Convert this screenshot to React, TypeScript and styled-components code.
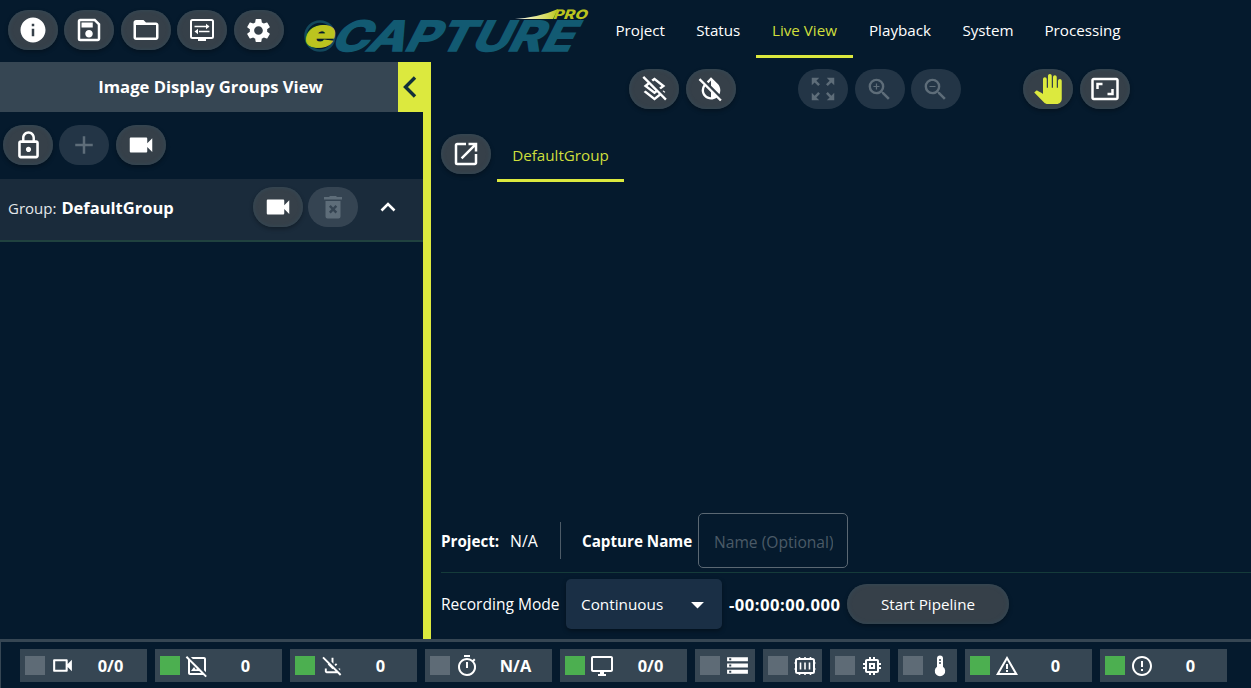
import React from 'react';
import styled, { createGlobalStyle, css } from 'styled-components';
import {
  MdAdd,
  MdArrowDropDown,
  MdErrorOutline,
  MdFolderOpen,
  MdInfo,
  MdInvertColorsOff,
  MdLockOutline,
  MdMemory,
  MdOpenInNew,
  MdOutlineAspectRatio,
  MdOutlineDesktopWindows,
  MdOutlineFileDownloadOff,
  MdOutlineImageNotSupported,
  MdOutlineLayersClear,
  MdOutlineSave,
  MdOutlineTimer,
  MdOutlineVideocam,
  MdPanTool,
  MdSettings,
  MdStorage,
  MdVideocam,
  MdWarningAmber,
  MdZoomIn,
  MdZoomOut,
  MdZoomOutMap,
} from 'react-icons/md';

const GlobalStyle = createGlobalStyle`
  * {
    box-sizing: border-box;
  }

  body {
    margin: 0;
    background: #051a2d;
    color: #fff;
    font-family: 'Open Sans', 'Noto Sans', sans-serif;
    font-size: 15.2px;
    overflow: hidden;
  }

  svg {
    display: block;
    flex-shrink: 0;
    overflow: visible;
  }
`;

const Page = styled.div`
  width: 1251px;
  height: 688px;
  display: flex;
  flex-direction: column;
`;

const Header = styled.header`
  height: 62px;
  flex-shrink: 0;
  display: flex;
  padding-left: 8px;
`;

const ButtonGroup = styled.div<{ $gap?: number }>`
  display: flex;
  align-items: center;
  gap: ${({ $gap }) => $gap ?? 6.4}px;
`;

const HeaderButtons = styled(ButtonGroup)`
  height: 60px;
  width: 295px;
`;

const PillButton = styled.button<{ $width?: number }>`
  width: ${({ $width }) => $width ?? 50}px;
  height: 40px;
  padding: 0;
  flex-shrink: 0;
  display: flex;
  align-items: center;
  justify-content: center;
  border: none;
  border-radius: 20px;
  background: #364049;
  color: #fff;
  font: inherit;
  box-shadow: inset 0 0 4px #344b5a, 0 2px 4px rgba(0, 0, 0, 0.3);

  &:disabled {
    background: rgba(255, 255, 255, 0.12);
    color: #5e6d79;
    box-shadow: none;
  }
`;

const HandButton = styled(PillButton)`
  color: #dce93e;
`;

const LogoBox = styled.div`
  width: 297px;
  height: 60px;
`;

const Tabs = styled.nav`
  display: flex;
  height: 58px;
`;

const Tab = styled.a<{ $width: number; $active?: boolean }>`
  width: ${({ $width }) => $width}px;
  display: flex;
  align-items: center;
  justify-content: center;
  padding-top: 5px;
  border-bottom: 3px solid transparent;
  white-space: nowrap;

  ${({ $active }) =>
    $active &&
    css`
      color: #cfdf3c;
      border-bottom-color: #dce93e;
    `}
`;

const Main = styled.main`
  height: 577px;
  flex-shrink: 0;
  display: flex;
`;

const SidePanel = styled.aside`
  width: 431px;
  flex-shrink: 0;
  border-right: 8px solid #dce93e;
`;

const PanelHeader = styled.div`
  height: 50px;
  display: flex;
  margin-right: -8px;
`;

const PanelTitle = styled.h2`
  flex: 1;
  margin: 0;
  padding-left: 23px;
  background: #364653;
  font-size: 16.65px;
  font-weight: 700;
  line-height: 50px;
  text-align: center;
`;

const CollapseButton = styled.button`
  width: 33px;
  padding: 0 9px 0 0;
  border: none;
  background: #dce93e;
  color: #12303a;
  display: flex;
  align-items: center;
  justify-content: center;
`;

const PanelTools = styled(ButtonGroup)`
  height: 67px;
  padding: 0 0 1px 3px;
`;

const GroupRow = styled.div`
  height: 63px;
  display: flex;
  align-items: center;
  padding: 0 27px 6px 8px;
  background: #1a2b3b;
  border-bottom: 2px solid #20423f;
`;

const GroupName = styled.span`
  flex: 1;
  display: flex;
  align-items: baseline;
  gap: 5px;
  padding-top: 2px;
  font-size: 15px;
  color: #e4e8eb;

  b {
    font-size: 16.5px;
    color: #fff;
  }
`;

const ChevronBox = styled.span`
  width: 38px;
  display: flex;
  justify-content: flex-end;
`;

const View = styled.section`
  flex: 1;
  display: flex;
  flex-direction: column;
  padding-left: 10px;
`;

const ViewTools = styled.div`
  height: 54px;
  display: flex;
  align-items: center;
  gap: 62.5px;
  padding-left: 188.3px;
`;

const ViewTabs = styled.div`
  height: 66px;
  display: flex;
  gap: 6px;
  padding-top: 18px;
`;

const GroupTab = styled(Tab)`
  height: 48px;
  padding-top: 0;
  padding-bottom: 4px;
`;

const Canvas = styled.div`
  flex: 1;
`;

const CaptureRow = styled.div`
  height: 62px;
  display: flex;
  align-items: center;
  padding: 2px 0 4px;
  border-bottom: 1px solid #153b3a;
`;

const Label = styled.span<{ $width: number; $bold?: boolean; $size?: number; $spacing?: number }>`
  width: ${({ $width }) => $width}px;
  flex-shrink: 0;
  white-space: nowrap;
  font-weight: ${({ $bold }) => ($bold ? 700 : 400)};
  font-size: ${({ $size }) => $size ?? 15}px;
  letter-spacing: ${({ $spacing }) => $spacing ?? 0}px;
`;

const Separator = styled.span`
  width: 1px;
  height: 37px;
  margin-right: 21px;
  background: #4d5b67;
`;

const NameInput = styled.input`
  width: 150px;
  height: 55px;
  padding: 2px 14px 0 15px;
  border: 1px solid #5b6873;
  border-radius: 5px;
  background: transparent;
  color: #fff;
  font: inherit;
  font-size: 15.6px;

  &::placeholder {
    color: #4b5a67;
    opacity: 1;
  }
`;

const RecordRow = styled.div`
  height: 66px;
  display: flex;
  align-items: center;
  padding-bottom: 4px;
`;

const ModeSelect = styled.div`
  width: 156px;
  height: 50px;
  margin-right: 7px;
  padding: 0 9px 0 15px;
  display: flex;
  align-items: center;
  justify-content: space-between;
  border-radius: 5px;
  background: #1a2f45;
  font-size: 15.3px;
  box-shadow: 0 2px 4px rgba(0, 0, 0, 0.35);
`;

const Footer = styled.footer`
  height: 49px;
  flex-shrink: 0;
  display: flex;
  gap: 8px;
  padding: 7px 0 0 19px;
  border-top: 3px solid #364653;
  border-left: 1px solid #364653;
`;

const StatusItem = styled.div<{ $wide: boolean }>`
  width: ${({ $wide }) => ($wide ? 127 : 59.5)}px;
  height: 33px;
  flex-shrink: 0;
  display: flex;
  align-items: center;
  padding-left: 5px;
  background: #364653;
`;

const Indicator = styled.span<{ $ok?: boolean }>`
  width: 20px;
  height: 19px;
  flex-shrink: 0;
  background: ${({ $ok }) => ($ok ? '#4caf50' : '#5e6b76')};
`;

const StatusIcon = styled.span<{ $wide: boolean }>`
  width: ${({ $wide }) => ($wide ? 34 : 34.5)}px;
  display: flex;
  justify-content: center;
`;

const StatusValue = styled.b`
  width: 63px;
  font-size: 16.4px;
  text-align: center;
`;

const Logo = () => (
  <svg width="297" height="60" viewBox="303 0 297 60">
    <defs>
      <linearGradient id="swoosh" x1="0" x2="1">
        <stop offset="0" stopColor="#fff" />
        <stop offset="0.75" stopColor="#d5da5a" />
        <stop offset="1" stopColor="#bcc41f" />
      </linearGradient>
    </defs>
    <circle cx="320" cy="36" r="14.5" fill="none" stroke="#13485c" strokeWidth="2.5" />
    <text
      transform="translate(302.5 46.5) skewX(-15)"
      fontFamily="Inter, sans-serif"
      fontSize="39"
      fontWeight="900"
      fill="#bcc41f"
      stroke="#bcc41f"
      textLength="30"
      lengthAdjust="spacingAndGlyphs"
    >
      e
    </text>
    <text
      transform="translate(329 51.2) skewX(-27)"
      fontFamily="Inter, sans-serif"
      fontSize="41.5"
      fontWeight="700"
      fill="#125a72"
      stroke="#125a72"
      strokeWidth="1.6"
      textLength="241"
      lengthAdjust="spacingAndGlyphs"
    >
      CAPTURE
    </text>
    <path d="M515 19 Q540 17 558 9 L553 19 Z" fill="url(#swoosh)" />
    <text
      transform="translate(552.5 18.800) skewX(-20)"
      fontFamily="Inter, sans-serif"
      fontSize="13"
      fontWeight="800"
      fill="#bcc41f"
      textLength="34"
      lengthAdjust="spacingAndGlyphs"
    >
      PRO
    </text>
  </svg>
);

const DisplaySettingsIcon = () => (
  <svg width="26" height="26" viewBox="0 0 26 26" fill="none" stroke="currentColor">
    <rect x="2" y="3" width="22" height="18" rx="1.5" strokeWidth="2" />
    <path d="M9 21.5h8v2.5h-8z" fill="currentColor" stroke="none" />
    <path d="M5.5 9.5h14M10 14.5h10.5" strokeWidth="1.6" />
    <path d="M17 6.8l3.5 2.7-3.5 2.7zM9 11.8l-3.5 2.7L9 17.2z" fill="currentColor" stroke="none" />
  </svg>
);

const DeleteIcon = () => (
  <svg width="20" height="24" viewBox="0 0 20 24" fill="currentColor">
    <path d="M1 2h5l1-1h6l1 1h5v2.5H1z" />
    <path
      fillRule="evenodd"
      d="M2.5 6h15v15.500a2 2 0 0 1-2 2h-11a2 2 0 0 1-2-2zM6 11.800l2.400 2.500L6 16.800l1.700 1.700 2.400-2.500 2.400 2.500 1.700-1.700-2.400-2.500 2.400-2.500-1.700-1.700-2.400 2.500-2.400-2.500z"
    />
  </svg>
);

const MemoryCardIcon = () => (
  <svg width="22" height="20" viewBox="0 0 22 20" fill="none" stroke="currentColor">
    <rect x="2" y="3" width="18" height="14" rx="1.5" strokeWidth="2" />
    <path d="M6.500 6.500v7M11 6.500v7M15.500 6.500v7" strokeWidth="1.6" />
    <path d="M5.500 1v2M11 1v2M16.500 1v2M5.500 17v2M11 17v2M16.500 17v2M0.500 7h2M0.500 13h2M19.500 7h2M19.500 13h2" strokeWidth="1.6" />
  </svg>
);

const ThermometerIcon = () => (
  <svg width="12" height="22" viewBox="0 0 12 22">
    <path d="M3 3.500a3 3 0 0 1 6 0v8.300a5.200 5.200 0 1 1-6 0z" fill="currentColor" />
    <path d="M6 4v2M6 7v2" stroke="#364653" strokeWidth="1.5" />
  </svg>
);

const Chevron = ({ up }: { up?: boolean }) => (
  <svg width={up ? 16 : 14} height={up ? 10 : 22} viewBox={up ? '0 0 16 10' : '0 0 14 22'} fill="none" stroke="currentColor" strokeWidth={up ? 2.6 : 3.4}>
    <path d={up ? 'M1.500 8.500L8 2l6.500 6.500' : 'M12 1.500L2.500 11l9.500 9.500'} />
  </svg>
);

const navItems = [
  { label: 'Project', width: 80.5 },
  { label: 'Status', width: 75.5 },
  { label: 'Live View', width: 97, active: true },
  { label: 'Playback', width: 94 },
  { label: 'System', width: 82 },
  { label: 'Processing', width: 107 },
];

const statusItems: { icon: React.ReactNode; value?: string; ok?: boolean }[] = [
  { icon: <MdOutlineVideocam size={25} />, value: '0/0' },
  { icon: <MdOutlineImageNotSupported size={24} />, value: '0', ok: true },
  { icon: <MdOutlineFileDownloadOff size={23} />, value: '0', ok: true },
  { icon: <MdOutlineTimer size={24} />, value: 'N/A' },
  { icon: <MdOutlineDesktopWindows size={24} />, value: '0/0', ok: true },
  { icon: <MdStorage size={25} /> },
  { icon: <MemoryCardIcon /> },
  { icon: <MdMemory size={24} /> },
  { icon: <ThermometerIcon /> },
  { icon: <MdWarningAmber size={24} />, value: '0', ok: true },
  { icon: <MdErrorOutline size={24} />, value: '0', ok: true },
];

const App: React.FC = () => {
  return (
    <Page>
      <GlobalStyle />
      <Header>
        <HeaderButtons>
          <PillButton><MdInfo size={30} /></PillButton>
          <PillButton><MdOutlineSave size={30} /></PillButton>
          <PillButton><MdFolderOpen size={30} /></PillButton>
          <PillButton><DisplaySettingsIcon /></PillButton>
          <PillButton><MdSettings size={29} /></PillButton>
        </HeaderButtons>
        <LogoBox>
          <Logo />
        </LogoBox>
        <Tabs>
          {navItems.map((item) => (
            <Tab key={item.label} $width={item.width} $active={item.active}>
              {item.label}
            </Tab>
          ))}
        </Tabs>
      </Header>

      <Main>
        <SidePanel>
          <PanelHeader>
            <PanelTitle>Image Display Groups View</PanelTitle>
            <CollapseButton><Chevron /></CollapseButton>
          </PanelHeader>
          <PanelTools>
            <PillButton><MdLockOutline size={31} /></PillButton>
            <PillButton disabled><MdAdd size={30} /></PillButton>
            <PillButton><MdVideocam size={30} /></PillButton>
          </PanelTools>
          <GroupRow>
            <GroupName>
              Group: <b>DefaultGroup</b>
            </GroupName>
            <ButtonGroup $gap={5}>
              <PillButton><MdVideocam size={30} /></PillButton>
              <PillButton disabled><DeleteIcon /></PillButton>
            </ButtonGroup>
            <ChevronBox><Chevron up /></ChevronBox>
          </GroupRow>
        </SidePanel>

        <View>
          <ViewTools>
            <ButtonGroup>
              <PillButton><MdOutlineLayersClear size={29} /></PillButton>
              <PillButton><MdInvertColorsOff size={28} /></PillButton>
            </ButtonGroup>
            <ButtonGroup>
              <PillButton disabled><MdZoomOutMap size={30} /></PillButton>
              <PillButton disabled><MdZoomIn size={29} /></PillButton>
              <PillButton disabled><MdZoomOut size={29} /></PillButton>
            </ButtonGroup>
            <ButtonGroup>
              <HandButton><MdPanTool size={30} /></HandButton>
              <PillButton><MdOutlineAspectRatio size={30} /></PillButton>
            </ButtonGroup>
          </ViewTools>
          <ViewTabs>
            <PillButton><MdOpenInNew size={30} /></PillButton>
            <GroupTab $width={127} $active>DefaultGroup</GroupTab>
          </ViewTabs>
          <Canvas />
          <CaptureRow>
            <Label $width={69} $bold $size={15.2}>Project:</Label>
            <Label $width={50} $size={15.8}>N/A</Label>
            <Separator />
            <Label $width={116} $bold $size={15.2}>Capture Name</Label>
            <NameInput placeholder="Name (Optional)" />
          </CaptureRow>
          <RecordRow>
            <Label $width={125} $size={15.55}>Recording Mode</Label>
            <ModeSelect>
              Continuous
              <MdArrowDropDown size={31} />
            </ModeSelect>
            <Label $width={118} $bold $size={16.6} $spacing={0.5}>-00:00:00.000</Label>
            <PillButton $width={162}>Start Pipeline</PillButton>
          </RecordRow>
        </View>
      </Main>

      <Footer>
        {statusItems.map((item, i) => (
          <StatusItem key={i} $wide={!!item.value}>
            <Indicator $ok={item.ok} />
            <StatusIcon $wide={!!item.value}>{item.icon}</StatusIcon>
            {item.value && <StatusValue>{item.value}</StatusValue>}
          </StatusItem>
        ))}
      </Footer>
    </Page>
  );
};

export default App;
